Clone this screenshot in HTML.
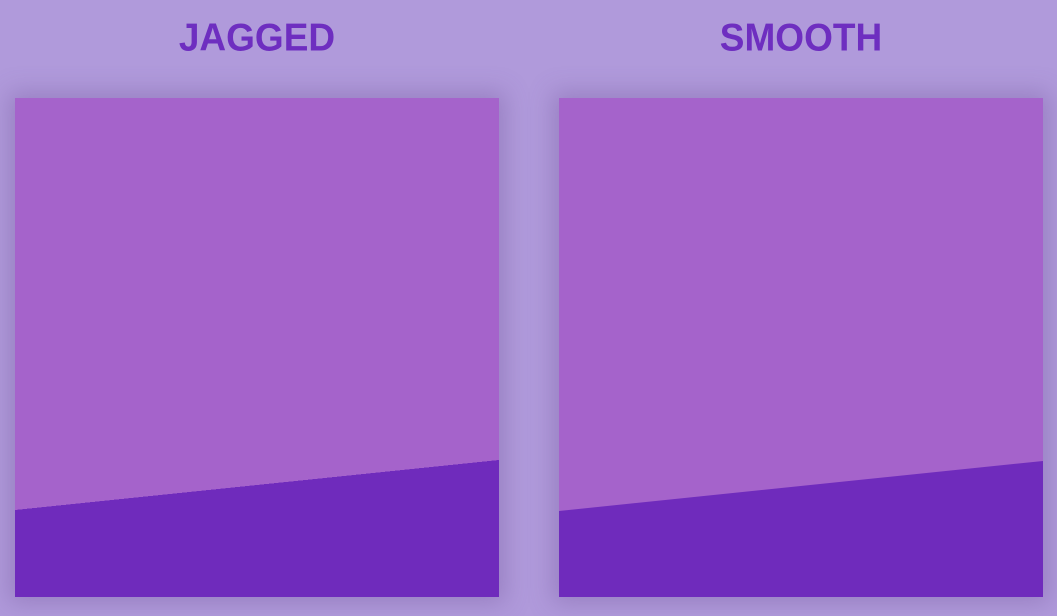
<!DOCTYPE html>
<html><head><style>
html,body{margin:0;padding:0;width:1057px;height:616px;overflow:hidden;background:#b09adb;font-family:"Liberation Sans",sans-serif}
.t{position:absolute;top:17px;font-weight:bold;font-size:37px;color:#6e2ec0;width:484px;text-align:center;transform:scaleY(1.05)}
.p{position:absolute;top:98px;width:484px;height:499px;background:#a563cb;box-shadow:0 0 22px 6px rgba(110,80,150,0.35)}
svg{position:absolute;left:0;top:0}
</style></head><body>
<div class="t" style="left:15px">JAGGED</div>
<div class="t" style="left:559px">SMOOTH</div>
<div class="p" style="left:15px"><svg width="484" height="499"><polygon points="0,412 484,362 484,499 0,499" fill="#6f2bbc" shape-rendering="crispEdges"/></svg></div>
<div class="p" style="left:559px"><svg width="484" height="499"><polygon points="0,413 484,363 484,499 0,499" fill="#6f2bbc"/></svg></div>
</body></html>
